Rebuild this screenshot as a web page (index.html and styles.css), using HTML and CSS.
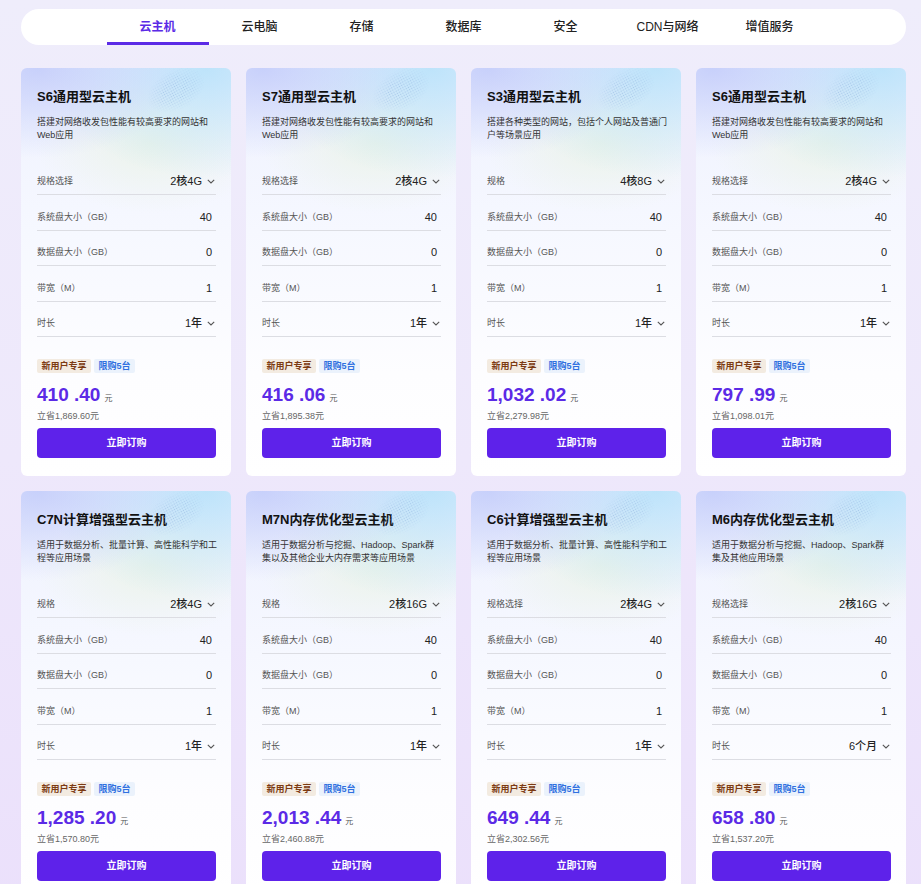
FILE: index.html
```html
<!DOCTYPE html>
<html lang="zh-CN">
<head>
    <meta charset="UTF-8">
    <meta name="viewport" content="width=device-width, initial-scale=1.0">
    <title>云主机 - 产品选购</title>
    <link rel="stylesheet" href="styles.css">
</head>
<body>
    <div class="page">
        <nav class="tabs">
            <a class="tab active">云主机</a>
            <a class="tab">云电脑</a>
            <a class="tab">存储</a>
            <a class="tab">数据库</a>
            <a class="tab">安全</a>
            <a class="tab">CDN与网络</a>
            <a class="tab">增值服务</a>
        </nav>

        <div class="cards">
            <!-- row 1 -->
            <div class="card">
                <h3 class="card-title">S6通用型云主机</h3>
                <p class="card-desc">搭建对网络收发包性能有较高要求的网站和Web应用</p>
                <ul class="specs">
                    <li class="spec"><span class="spec-label">规格选择</span><span class="spec-value select">2核4G<svg class="chev" viewBox="0 0 8 5"><path d="M0.8 0.8 L4 4 L7.2 0.8"/></svg></span></li>
                    <li class="spec"><span class="spec-label">系统盘大小（GB）</span><span class="spec-value">40</span></li>
                    <li class="spec"><span class="spec-label">数据盘大小（GB）</span><span class="spec-value">0</span></li>
                    <li class="spec"><span class="spec-label">带宽（M）</span><span class="spec-value">1</span></li>
                    <li class="spec"><span class="spec-label">时长</span><span class="spec-value select">1年<svg class="chev" viewBox="0 0 8 5"><path d="M0.8 0.8 L4 4 L7.2 0.8"/></svg></span></li>
                </ul>
                <div class="tags"><span class="tag tag-new">新用户专享</span><span class="tag tag-limit">限购5台</span></div>
                <div class="price"><span class="price-num">410 .40</span><span class="price-unit">元</span></div>
                <div class="saved">立省1,869.60元</div>
                <a class="buy-btn">立即订购</a>
            </div>

            <div class="card">
                <h3 class="card-title">S7通用型云主机</h3>
                <p class="card-desc">搭建对网络收发包性能有较高要求的网站和Web应用</p>
                <ul class="specs">
                    <li class="spec"><span class="spec-label">规格选择</span><span class="spec-value select">2核4G<svg class="chev" viewBox="0 0 8 5"><path d="M0.8 0.8 L4 4 L7.2 0.8"/></svg></span></li>
                    <li class="spec"><span class="spec-label">系统盘大小（GB）</span><span class="spec-value">40</span></li>
                    <li class="spec"><span class="spec-label">数据盘大小（GB）</span><span class="spec-value">0</span></li>
                    <li class="spec"><span class="spec-label">带宽（M）</span><span class="spec-value">1</span></li>
                    <li class="spec"><span class="spec-label">时长</span><span class="spec-value select">1年<svg class="chev" viewBox="0 0 8 5"><path d="M0.8 0.8 L4 4 L7.2 0.8"/></svg></span></li>
                </ul>
                <div class="tags"><span class="tag tag-new">新用户专享</span><span class="tag tag-limit">限购5台</span></div>
                <div class="price"><span class="price-num">416 .06</span><span class="price-unit">元</span></div>
                <div class="saved">立省1,895.38元</div>
                <a class="buy-btn">立即订购</a>
            </div>

            <div class="card">
                <h3 class="card-title">S3通用型云主机</h3>
                <p class="card-desc">搭建各种类型的网站，包括个人网站及普通门户等场景应用</p>
                <ul class="specs">
                    <li class="spec"><span class="spec-label">规格</span><span class="spec-value select">4核8G<svg class="chev" viewBox="0 0 8 5"><path d="M0.8 0.8 L4 4 L7.2 0.8"/></svg></span></li>
                    <li class="spec"><span class="spec-label">系统盘大小（GB）</span><span class="spec-value">40</span></li>
                    <li class="spec"><span class="spec-label">数据盘大小（GB）</span><span class="spec-value">0</span></li>
                    <li class="spec"><span class="spec-label">带宽（M）</span><span class="spec-value">1</span></li>
                    <li class="spec"><span class="spec-label">时长</span><span class="spec-value select">1年<svg class="chev" viewBox="0 0 8 5"><path d="M0.8 0.8 L4 4 L7.2 0.8"/></svg></span></li>
                </ul>
                <div class="tags"><span class="tag tag-new">新用户专享</span><span class="tag tag-limit">限购5台</span></div>
                <div class="price"><span class="price-num">1,032 .02</span><span class="price-unit">元</span></div>
                <div class="saved">立省2,279.98元</div>
                <a class="buy-btn">立即订购</a>
            </div>

            <div class="card">
                <h3 class="card-title">S6通用型云主机</h3>
                <p class="card-desc">搭建对网络收发包性能有较高要求的网站和Web应用</p>
                <ul class="specs">
                    <li class="spec"><span class="spec-label">规格选择</span><span class="spec-value select">2核4G<svg class="chev" viewBox="0 0 8 5"><path d="M0.8 0.8 L4 4 L7.2 0.8"/></svg></span></li>
                    <li class="spec"><span class="spec-label">系统盘大小（GB）</span><span class="spec-value">40</span></li>
                    <li class="spec"><span class="spec-label">数据盘大小（GB）</span><span class="spec-value">0</span></li>
                    <li class="spec"><span class="spec-label">带宽（M）</span><span class="spec-value">1</span></li>
                    <li class="spec"><span class="spec-label">时长</span><span class="spec-value select">1年<svg class="chev" viewBox="0 0 8 5"><path d="M0.8 0.8 L4 4 L7.2 0.8"/></svg></span></li>
                </ul>
                <div class="tags"><span class="tag tag-new">新用户专享</span><span class="tag tag-limit">限购5台</span></div>
                <div class="price"><span class="price-num">797 .99</span><span class="price-unit">元</span></div>
                <div class="saved">立省1,098.01元</div>
                <a class="buy-btn">立即订购</a>
            </div>

            <!-- row 2 -->
            <div class="card">
                <h3 class="card-title">C7N计算增强型云主机</h3>
                <p class="card-desc">适用于数据分析、批量计算、高性能科学和工程等应用场景</p>
                <ul class="specs">
                    <li class="spec"><span class="spec-label">规格</span><span class="spec-value select">2核4G<svg class="chev" viewBox="0 0 8 5"><path d="M0.8 0.8 L4 4 L7.2 0.8"/></svg></span></li>
                    <li class="spec"><span class="spec-label">系统盘大小（GB）</span><span class="spec-value">40</span></li>
                    <li class="spec"><span class="spec-label">数据盘大小（GB）</span><span class="spec-value">0</span></li>
                    <li class="spec"><span class="spec-label">带宽（M）</span><span class="spec-value">1</span></li>
                    <li class="spec"><span class="spec-label">时长</span><span class="spec-value select">1年<svg class="chev" viewBox="0 0 8 5"><path d="M0.8 0.8 L4 4 L7.2 0.8"/></svg></span></li>
                </ul>
                <div class="tags"><span class="tag tag-new">新用户专享</span><span class="tag tag-limit">限购5台</span></div>
                <div class="price"><span class="price-num">1,285 .20</span><span class="price-unit">元</span></div>
                <div class="saved">立省1,570.80元</div>
                <a class="buy-btn">立即订购</a>
            </div>

            <div class="card">
                <h3 class="card-title">M7N内存优化型云主机</h3>
                <p class="card-desc">适用于数据分析与挖掘、Hadoop、Spark群集以及其他企业大内存需求等应用场景</p>
                <ul class="specs">
                    <li class="spec"><span class="spec-label">规格</span><span class="spec-value select">2核16G<svg class="chev" viewBox="0 0 8 5"><path d="M0.8 0.8 L4 4 L7.2 0.8"/></svg></span></li>
                    <li class="spec"><span class="spec-label">系统盘大小（GB）</span><span class="spec-value">40</span></li>
                    <li class="spec"><span class="spec-label">数据盘大小（GB）</span><span class="spec-value">0</span></li>
                    <li class="spec"><span class="spec-label">带宽（M）</span><span class="spec-value">1</span></li>
                    <li class="spec"><span class="spec-label">时长</span><span class="spec-value select">1年<svg class="chev" viewBox="0 0 8 5"><path d="M0.8 0.8 L4 4 L7.2 0.8"/></svg></span></li>
                </ul>
                <div class="tags"><span class="tag tag-new">新用户专享</span><span class="tag tag-limit">限购5台</span></div>
                <div class="price"><span class="price-num">2,013 .44</span><span class="price-unit">元</span></div>
                <div class="saved">立省2,460.88元</div>
                <a class="buy-btn">立即订购</a>
            </div>

            <div class="card">
                <h3 class="card-title">C6计算增强型云主机</h3>
                <p class="card-desc">适用于数据分析、批量计算、高性能科学和工程等应用场景</p>
                <ul class="specs">
                    <li class="spec"><span class="spec-label">规格选择</span><span class="spec-value select">2核4G<svg class="chev" viewBox="0 0 8 5"><path d="M0.8 0.8 L4 4 L7.2 0.8"/></svg></span></li>
                    <li class="spec"><span class="spec-label">系统盘大小（GB）</span><span class="spec-value">40</span></li>
                    <li class="spec"><span class="spec-label">数据盘大小（GB）</span><span class="spec-value">0</span></li>
                    <li class="spec"><span class="spec-label">带宽（M）</span><span class="spec-value">1</span></li>
                    <li class="spec"><span class="spec-label">时长</span><span class="spec-value select">1年<svg class="chev" viewBox="0 0 8 5"><path d="M0.8 0.8 L4 4 L7.2 0.8"/></svg></span></li>
                </ul>
                <div class="tags"><span class="tag tag-new">新用户专享</span><span class="tag tag-limit">限购5台</span></div>
                <div class="price"><span class="price-num">649 .44</span><span class="price-unit">元</span></div>
                <div class="saved">立省2,302.56元</div>
                <a class="buy-btn">立即订购</a>
            </div>

            <div class="card">
                <h3 class="card-title">M6内存优化型云主机</h3>
                <p class="card-desc">适用于数据分析与挖掘、Hadoop、Spark群集及其他应用场景</p>
                <ul class="specs">
                    <li class="spec"><span class="spec-label">规格选择</span><span class="spec-value select">2核16G<svg class="chev" viewBox="0 0 8 5"><path d="M0.8 0.8 L4 4 L7.2 0.8"/></svg></span></li>
                    <li class="spec"><span class="spec-label">系统盘大小（GB）</span><span class="spec-value">40</span></li>
                    <li class="spec"><span class="spec-label">数据盘大小（GB）</span><span class="spec-value">0</span></li>
                    <li class="spec"><span class="spec-label">带宽（M）</span><span class="spec-value">1</span></li>
                    <li class="spec"><span class="spec-label">时长</span><span class="spec-value select">6个月<svg class="chev" viewBox="0 0 8 5"><path d="M0.8 0.8 L4 4 L7.2 0.8"/></svg></span></li>
                </ul>
                <div class="tags"><span class="tag tag-new">新用户专享</span><span class="tag tag-limit">限购5台</span></div>
                <div class="price"><span class="price-num">658 .80</span><span class="price-unit">元</span></div>
                <div class="saved">立省1,537.20元</div>
                <a class="buy-btn">立即订购</a>
            </div>
        </div>
    </div>
</body>
</html>
```

FILE: styles.css
```css
* {
    margin: 0;
    padding: 0;
    box-sizing: border-box;
}

body {
    font-family: "Liberation Sans", "Noto Sans CJK SC", sans-serif;
    color: #222;
    background: linear-gradient(180deg, #efedfb 0%, #eee8fb 50%, #ebe0fb 100%);
    min-height: 100vh;
}

.page {
    padding: 9px 15px 20px 21px;
}

/* top navigation */
.tabs {
    display: flex;
    justify-content: center;
    height: 36px;
    background: #fff;
    border-radius: 18px;
    overflow: hidden;
}

.tab {
    width: 102px;
    text-align: center;
    font-size: 12px;
    line-height: 36px;
    color: #222;
    font-weight: 500;
    cursor: pointer;
    position: relative;
}

.tab.active {
    color: #5b2be6;
    font-weight: 700;
}

.tab.active::after {
    content: "";
    position: absolute;
    left: 0;
    right: 0;
    bottom: 0;
    height: 3px;
    background: #5b2be6;
}

/* product cards */
.cards {
    display: grid;
    grid-template-columns: repeat(4, 210px);
    gap: 15px;
    margin-top: 23px;
}

.card {
    position: relative;
    overflow: hidden;
    border-radius: 6px;
    padding: 20px 15px 18px 16px;
    background:
        radial-gradient(ellipse 70% 90px at 8% 0%, rgba(190, 200, 250, 0.8), rgba(190, 200, 250, 0) 100%),
        radial-gradient(ellipse 75% 110px at 88% 0%, rgba(184, 226, 250, 0.9), rgba(184, 226, 250, 0) 100%),
        radial-gradient(ellipse 55% 70px at 62% 75px, rgba(234, 243, 228, 0.8), rgba(234, 243, 228, 0) 100%),
        linear-gradient(180deg, #eef1fe 0%, #f6f8ff 40%, #fdfdff 75%, #fff 100%);
}

.card::before {
    content: "";
    position: absolute;
    left: 124px;
    top: 2px;
    width: 62px;
    height: 40px;
    background-image: radial-gradient(circle, rgba(140, 175, 220, 0.55) 0.6px, transparent 0.9px);
    background-size: 2.5px 2.5px;
    -webkit-mask-image: radial-gradient(ellipse 50% 50% at 50% 50%, #000 40%, transparent 100%);
    mask-image: radial-gradient(ellipse 50% 50% at 50% 50%, #000 40%, transparent 100%);
    transform: rotate(-28deg);
    pointer-events: none;
}

.card-title {
    font-size: 13px;
    line-height: 18px;
    font-weight: 700;
    color: #111;
}

.card-desc {
    margin-top: 9.5px;
    margin-right: -2px;
    font-size: 9px;
    line-height: 13px;
    height: 26px;
    color: #333;
}

.specs {
    list-style: none;
    margin-top: 18px;
}

.spec {
    display: flex;
    justify-content: space-between;
    align-items: center;
    padding: 14.5px 0 6px;
    line-height: 14px;
    height: 35.5px;
    border-bottom: 1px solid #dcdde3;
}

.spec-label {
    font-size: 9px;
    color: #555;
}

.spec-value {
    font-size: 11px;
    color: #222;
    padding-right: 4px;
    display: flex;
    align-items: center;
}

.spec-value.select {
    padding-right: 1px;
    font-weight: 500;
}

.chev {
    width: 8px;
    height: 5px;
    margin-left: 5px;
    fill: none;
    stroke: #555;
    stroke-width: 1.1;
}

.tags {
    display: flex;
    gap: 3px;
    margin-top: 22px;
}

.tag {
    font-size: 9px;
    line-height: 14px;
    padding: 0 4.5px;
    border-radius: 2px;
    font-weight: 700;
}

.tag-new {
    background: #f3ebe1;
    color: #7c3a12;
}

.tag-limit {
    background: #ebf2fc;
    color: #2f70e0;
}

.price {
    display: flex;
    align-items: baseline;
    height: 22px;
    margin-top: 10.5px;
    line-height: 22px;
    color: #5b2ae6;
}

.price-num {
    font-size: 19px;
    font-weight: 700;
}

.price-unit {
    font-size: 8px;
    line-height: 1;
    color: #555;
    margin-left: 4px;
}

.saved {
    margin-top: 4px;
    font-size: 9px;
    line-height: 12px;
    color: #666;
}

.buy-btn {
    display: block;
    margin-top: 6.5px;
    height: 30px;
    line-height: 30px;
    text-align: center;
    background: #5e22ea;
    color: #fff;
    font-size: 10px;
    font-weight: 700;
    border-radius: 4px;
    cursor: pointer;
}
```
